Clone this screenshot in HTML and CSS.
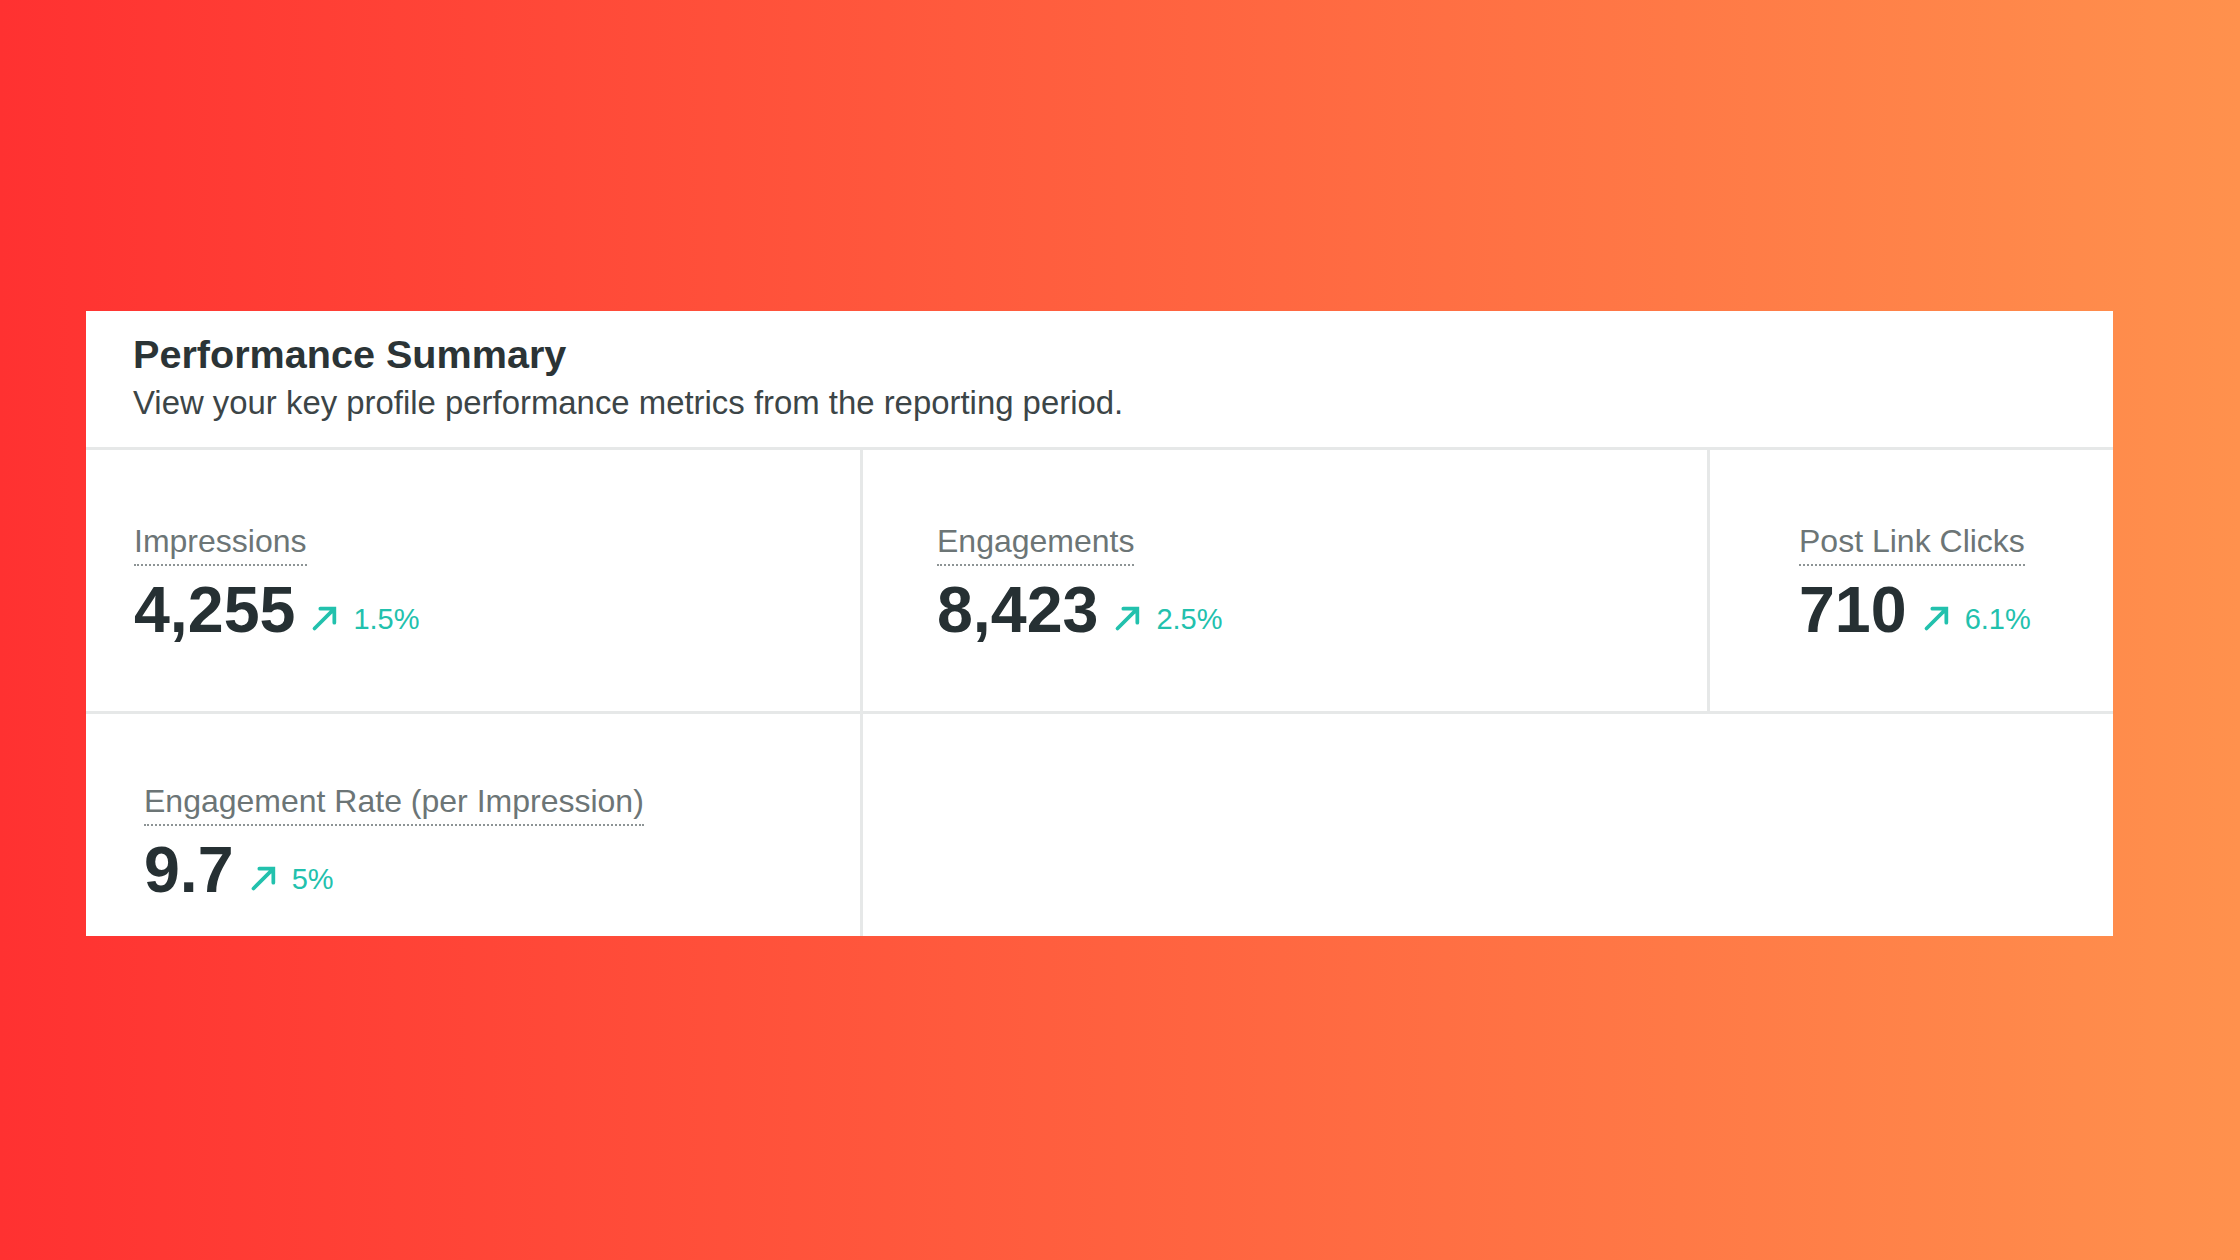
FILE: index.html
```html
<!DOCTYPE html>
<html lang="en">
<head>
  <meta charset="UTF-8">
  <title>Performance Summary</title>
  <link rel="stylesheet" href="styles.css">
</head>
<body>

  <div class="card">
    <!-- Card header -->
    <div class="card-head">
      <h2 class="card-title">Performance Summary</h2>
      <p class="card-sub">View your key profile performance metrics from the reporting period.</p>
    </div>

    <!-- Metric tiles -->
    <div class="metrics">
      <div class="metric metric-impressions">
        <span class="metric-label">Impressions</span>
        <div class="metric-value">
          <span class="metric-num">4,255</span>
          <svg class="trend" viewBox="0 0 24 24"><path d="M3 21 L19 5 M8 4 H20 V16"/></svg>
          <span class="metric-delta">1.5%</span>
        </div>
      </div>

      <div class="metric metric-engagements">
        <span class="metric-label">Engagements</span>
        <div class="metric-value">
          <span class="metric-num">8,423</span>
          <svg class="trend" viewBox="0 0 24 24"><path d="M3 21 L19 5 M8 4 H20 V16"/></svg>
          <span class="metric-delta">2.5%</span>
        </div>
      </div>

      <div class="metric metric-clicks">
        <span class="metric-label">Post Link Clicks</span>
        <div class="metric-value">
          <span class="metric-num">710</span>
          <svg class="trend" viewBox="0 0 24 24"><path d="M3 21 L19 5 M8 4 H20 V16"/></svg>
          <span class="metric-delta">6.1%</span>
        </div>
      </div>

      <div class="metric metric-rate">
        <span class="metric-label">Engagement Rate (per Impression)</span>
        <div class="metric-value">
          <span class="metric-num">9.7</span>
          <svg class="trend" viewBox="0 0 24 24"><path d="M3 21 L19 5 M8 4 H20 V16"/></svg>
          <span class="metric-delta">5%</span>
        </div>
      </div>

      <div class="metric metric-empty"></div>
    </div>
  </div>

</body>
</html>
```

FILE: styles.css
```css
body {
  margin: 0;
  height: 1260px;
  background: linear-gradient(90deg, #ff3131, #ff914d);
  font-family: "Liberation Sans", Arial, sans-serif;
  overflow: hidden;
}

.card {
  margin: 311px 0 0 86px;
  width: 2027px;
  height: 625px;
  background: #fff;
  display: flex;
  flex-direction: column;
}

.card-head {
  height: 139px;
  padding: 19px 0 0 47px;
  box-sizing: border-box;
  border-bottom: 3px solid #e6e8e8;
}

.card-title {
  margin: 0;
  font-size: 39.6px;
  line-height: 48px;
  font-weight: bold;
  color: #2b3436;
}

.card-sub {
  margin: 6px 0 0;
  font-size: 32.9px;
  line-height: 38px;
  color: #3c4547;
}

.metrics {
  flex: 1;
  display: grid;
  grid-template-columns: 777px 847px 1fr;
  grid-template-rows: 264px 1fr;
}

.metric {
  display: flex;
  flex-direction: column;
  align-items: flex-start;
  box-sizing: border-box;
  border-right: 3px solid #e6e8e8;
  border-bottom: 3px solid #e6e8e8;
  padding-top: 72px;
}

.metric-impressions { padding-left: 48px; }
.metric-engagements { padding-left: 74px; }
.metric-clicks { padding-left: 89px; border-right: none; }
.metric-rate { padding-left: 58px; padding-top: 68px; border-bottom: none; }
.metric-empty { grid-column: span 2; border: none; }

.metric-label {
  font-size: 32px;
  line-height: 38px;
  color: #6c7576;
  padding-bottom: 4px;
  border-bottom: 2px dotted #8d9495;
}

/* number, arrow and change sit on one line; font-size 0 drops the gaps */
.metric-value {
  margin-top: 12px;
  font-size: 0;
  white-space: nowrap;
}

.metric-num {
  font-size: 64.5px;
  line-height: 1;
  font-weight: bold;
  color: #263033;
}

.trend {
  width: 28px;
  height: 28px;
  margin-left: 16px;
  vertical-align: 0;
  fill: none;
  stroke: #22c1ad;
  stroke-width: 3.2;
  stroke-linecap: round;
}

.metric-delta {
  margin-left: 14px;
  font-size: 29px;
  vertical-align: 3px;
  color: #22c1ad;
}
```
